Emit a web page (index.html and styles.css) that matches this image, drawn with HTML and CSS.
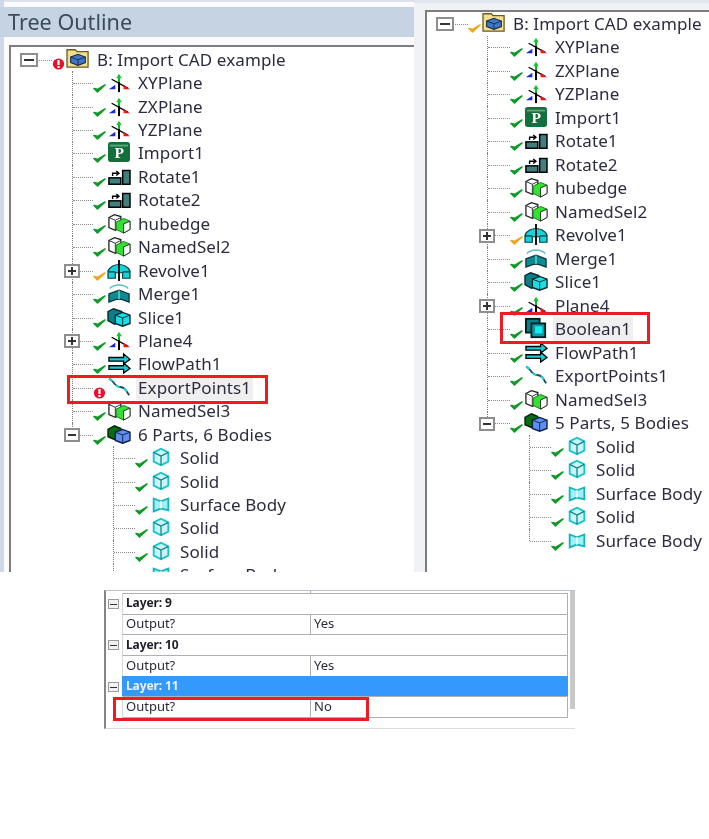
FILE: index.html
```html
<!DOCTYPE html>
<html lang="en">
<head>
<meta charset="utf-8">
<title>Tree Outline comparison</title>
<link rel="stylesheet" href="styles.css">
</head>
<body>
<svg class="defs" width="0" height="0" aria-hidden="true">
  <symbol id="i-ok" viewBox="0 0 13 12"><path d="M1 6.5 4.5 10 12 3 4.6 7.4Z" fill="#109a28" stroke="#109a28" stroke-width="1.6" stroke-linejoin="round"/></symbol>
  <symbol id="i-warn" viewBox="0 0 13 12"><path d="M1 6.5 4.5 10 12 3 4.6 7.4Z" fill="#eaa91f" stroke="#eaa91f" stroke-width="1.6" stroke-linejoin="round"/></symbol>
  <symbol id="i-err" viewBox="0 0 13 12"><circle cx="6.5" cy="6" r="5.6" fill="#e5122a"/><rect x="5.4" y="2" width="2.2" height="5" fill="#fff"/><rect x="5.4" y="8" width="2.2" height="2" fill="#fff"/></symbol>
  <symbol id="i-folder" viewBox="0 0 26 24"><path d="M1 3h9l2 2h12v17H1Z" fill="#f3df8f" stroke="#6d5a20" stroke-width="1.4"/><path d="M5 11l8-3 8 3v6l-8 3-8-3Z" fill="#3f78c8" stroke="#1b2c48" stroke-width="1.2"/><path d="M5 11l8 3 8-3M13 14v6" fill="none" stroke="#1b2c48"/></symbol>
  <symbol id="i-plane" viewBox="0 0 26 24"><path d="M13 8v15" stroke="#000" stroke-width="2.2"/><path d="M5 9 23 19" stroke="#000" stroke-width="1.5"/><path d="M13 3l-3 5h6Z" fill="#12c22c"/><path d="M13 6v6" stroke="#12c22c" stroke-width="2"/><path d="M2 20l7-5v5Z" fill="#1c24e8"/><path d="M18 15l7 5h-7Z" fill="#e51616"/></symbol>
  <symbol id="i-rotate" viewBox="0 0 26 24"><rect x="2" y="14" width="13" height="7" fill="#3f7f7e" stroke="#000" stroke-width="1.6"/><rect x="17" y="6" width="8" height="15" fill="#3f7f7e" stroke="#000" stroke-width="1.6"/><path d="M6 12V9h6M10 6.5 13 9l-3 2.5" fill="none" stroke="#000" stroke-width="1.5"/></symbol>
  <symbol id="i-named" viewBox="0 0 26 24"><path d="M2 6 8 3l7 2v12l-6 3-7-3Z" fill="#fff" stroke="#222" stroke-width="1.4"/><path d="M2 6l7 3 6-3M9 9v11" fill="none" stroke="#222"/><path d="M10 11l8-4 7 3v9l-7 4-8-4Z" fill="#2fe32f" stroke="#1c6e1c"/><path d="M18 13v10l7-4V10Z" fill="#fff" stroke="#222"/></symbol>
  <symbol id="i-revolve" viewBox="0 0 26 24"><path d="M1 21v-8C3 8 9 6 13 6s10 2 12 7v8h-8v-6H9v6Z" fill="#17d4dc" stroke="#0a3b42" stroke-width="1.3"/><path d="M1 14h8M17 14h8" stroke="#0a3b42" stroke-width="1.2"/><path d="M13 1v23" stroke="#000" stroke-width="2"/></symbol>
  <symbol id="i-merge" viewBox="0 0 26 24"><path d="M3 7C8 2 18 2 23 7" fill="none" stroke="#5dbcc0" stroke-width="1.5"/><path d="M2 13 13 9l11 4v9l-8-3h-6l-8 3Z" fill="#0e8b92" stroke="#06353a" stroke-width="1.4"/><path d="M13 9v10" stroke="#9fe" stroke-width="1"/></symbol>
  <symbol id="i-slice" viewBox="0 0 26 24"><path d="M1 6 7 3l9 3v11l-8 3-7-4Z" fill="#0b7f87" stroke="#03272b" stroke-width="1.5"/><path d="M9 10l8-3 8 3v9l-8 3-8-3Z" fill="#16dfe8" stroke="#03272b" stroke-width="1.5"/><path d="M9 10l8 3 8-3M17 13v9" fill="none" stroke="#03272b"/></symbol>
  <symbol id="i-flow" viewBox="0 0 26 24"><path d="M2 6h16V2l7 6-7 5v-3H2Z" fill="#19cdd6" stroke="#000" stroke-width="1.4"/><path d="M2 15h16v-3l7 6-7 5v-4H2Z" fill="#19cdd6" stroke="#000" stroke-width="1.4"/></symbol>
  <symbol id="i-export" viewBox="0 0 26 24"><path d="M2 3c5 1 6 9 12 9 5 0 7 4 10 9" fill="none" stroke="#1d4a50" stroke-width="2"/><path d="M2 3c5 1 6 9 12 9 5 0 7 4 10 9" fill="none" stroke="#19d3dc" stroke-width="2" stroke-dasharray="5 5"/></symbol>
  <symbol id="i-parts" viewBox="0 0 26 24"><path d="M1 7 8 3l7 3v9l-7 3-7-3Z" fill="#0a6c12" stroke="#02230a" stroke-width="1.5"/><path d="M9 10l8-3 8 3v9l-8 3-8-3Z" fill="#5c8ff0" stroke="#101f48" stroke-width="1.5"/><path d="M9 10l8 3 8-3M17 13v9" fill="none" stroke="#101f48"/></symbol>
  <symbol id="i-solid" viewBox="0 0 26 24"><path d="M5 7l8-4 8 4v10l-8 4-8-4Z" fill="#c7f5f8" stroke="#17c3cd" stroke-width="2"/><path d="M5 7l8 4 8-4M13 11v10" fill="none" stroke="#15808a" stroke-width="1.4"/></symbol>
  <symbol id="i-surface" viewBox="0 0 26 24"><path d="M5 6l8 3 8-3v13l-8-2-8 3Z" fill="#9ef0f4" stroke="#17b3bd" stroke-width="2"/><path d="M13 9v8" stroke="#e8ffff" stroke-width="2"/></symbol>
  <symbol id="i-boolean" viewBox="0 0 26 24"><rect x="2" y="2" width="15" height="15" fill="#0b7f87" stroke="#021e22" stroke-width="2"/><rect x="8" y="7" width="15" height="15" fill="#0e9aa2" stroke="#021e22" stroke-width="2"/><rect x="12" y="10" width="8" height="8" fill="#16e9f0"/></symbol>
</svg>

<div class="collage">
  <section class="panel panel-left">
    <h1 class="panel-title">Tree Outline</h1>
    <div class="tree-frame tree-frame-left">
      <div class="tree">
        <div class="row root"><span class="slot slot-bare"><span class="exp exp-root exp-minus"></span></span><svg class="status"><use href="#i-err"/></svg><svg class="ico"><use href="#i-folder"/></svg><span class="label">B: Import CAD example</span></div>
        <div class="branch level1">
          <div class="row"><span class="slot"></span><svg class="status"><use href="#i-ok"/></svg><svg class="ico"><use href="#i-plane"/></svg><span class="label">XYPlane</span></div>
          <div class="row"><span class="slot"></span><svg class="status"><use href="#i-ok"/></svg><svg class="ico"><use href="#i-plane"/></svg><span class="label">ZXPlane</span></div>
          <div class="row"><span class="slot"></span><svg class="status"><use href="#i-ok"/></svg><svg class="ico"><use href="#i-plane"/></svg><span class="label">YZPlane</span></div>
          <div class="row"><span class="slot"></span><svg class="status"><use href="#i-ok"/></svg><svg class="ico" viewBox="0 0 26 24"><rect x="1" y="1" width="24" height="22" rx="3" fill="#136f3c"/><rect x="3" y="4" width="20" height="2" fill="#5fa77f"/><text x="8" y="18" class="svg-p">P</text></svg><span class="label">Import1</span></div>
          <div class="row"><span class="slot"></span><svg class="status"><use href="#i-ok"/></svg><svg class="ico"><use href="#i-rotate"/></svg><span class="label">Rotate1</span></div>
          <div class="row"><span class="slot"></span><svg class="status"><use href="#i-ok"/></svg><svg class="ico"><use href="#i-rotate"/></svg><span class="label">Rotate2</span></div>
          <div class="row"><span class="slot"></span><svg class="status"><use href="#i-ok"/></svg><svg class="ico"><use href="#i-named"/></svg><span class="label">hubedge</span></div>
          <div class="row"><span class="slot"></span><svg class="status"><use href="#i-ok"/></svg><svg class="ico"><use href="#i-named"/></svg><span class="label">NamedSel2</span></div>
          <div class="row"><span class="slot"><span class="exp exp-plus"></span></span><svg class="status"><use href="#i-warn"/></svg><svg class="ico"><use href="#i-revolve"/></svg><span class="label">Revolve1</span></div>
          <div class="row"><span class="slot"></span><svg class="status"><use href="#i-ok"/></svg><svg class="ico"><use href="#i-merge"/></svg><span class="label">Merge1</span></div>
          <div class="row"><span class="slot"></span><svg class="status"><use href="#i-ok"/></svg><svg class="ico"><use href="#i-slice"/></svg><span class="label">Slice1</span></div>
          <div class="row"><span class="slot"><span class="exp exp-plus"></span></span><svg class="status"><use href="#i-ok"/></svg><svg class="ico"><use href="#i-plane"/></svg><span class="label">Plane4</span></div>
          <div class="row"><span class="slot"></span><svg class="status"><use href="#i-ok"/></svg><svg class="ico"><use href="#i-flow"/></svg><span class="label">FlowPath1</span></div>
          <div class="row"><span class="slot"></span><svg class="status"><use href="#i-err"/></svg><svg class="ico"><use href="#i-export"/></svg><span class="label label-hover">ExportPoints1</span></div>
          <div class="row"><span class="slot"></span><svg class="status"><use href="#i-ok"/></svg><svg class="ico"><use href="#i-named"/></svg><span class="label">NamedSel3</span></div>
          <div class="row last"><span class="slot"><span class="exp exp-minus"></span></span><svg class="status"><use href="#i-ok"/></svg><svg class="ico"><use href="#i-parts"/></svg><span class="label">6 Parts, 6 Bodies</span></div>
          <div class="branch level2">
            <div class="row"><span class="slot"></span><svg class="status"><use href="#i-ok"/></svg><svg class="ico"><use href="#i-solid"/></svg><span class="label">Solid</span></div>
            <div class="row"><span class="slot"></span><svg class="status"><use href="#i-ok"/></svg><svg class="ico"><use href="#i-solid"/></svg><span class="label">Solid</span></div>
            <div class="row"><span class="slot"></span><svg class="status"><use href="#i-ok"/></svg><svg class="ico"><use href="#i-surface"/></svg><span class="label">Surface Body</span></div>
            <div class="row"><span class="slot"></span><svg class="status"><use href="#i-ok"/></svg><svg class="ico"><use href="#i-solid"/></svg><span class="label">Solid</span></div>
            <div class="row"><span class="slot"></span><svg class="status"><use href="#i-ok"/></svg><svg class="ico"><use href="#i-solid"/></svg><span class="label">Solid</span></div>
            <div class="row"><span class="slot"></span><svg class="status"><use href="#i-ok"/></svg><svg class="ico"><use href="#i-surface"/></svg><span class="label">Surface Body</span></div>
          </div>
        </div>
      </div>
    </div>
    <div class="mark mark-export"></div>
  </section>

  <section class="panel panel-right">
    <div class="tree-frame tree-frame-right">
      <div class="tree">
        <div class="row root"><span class="slot slot-bare"><span class="exp exp-root exp-minus"></span></span><svg class="status"><use href="#i-warn"/></svg><svg class="ico"><use href="#i-folder"/></svg><span class="label">B: Import CAD example</span></div>
        <div class="branch level1">
          <div class="row"><span class="slot"></span><svg class="status"><use href="#i-ok"/></svg><svg class="ico"><use href="#i-plane"/></svg><span class="label">XYPlane</span></div>
          <div class="row"><span class="slot"></span><svg class="status"><use href="#i-ok"/></svg><svg class="ico"><use href="#i-plane"/></svg><span class="label">ZXPlane</span></div>
          <div class="row"><span class="slot"></span><svg class="status"><use href="#i-ok"/></svg><svg class="ico"><use href="#i-plane"/></svg><span class="label">YZPlane</span></div>
          <div class="row"><span class="slot"></span><svg class="status"><use href="#i-ok"/></svg><svg class="ico" viewBox="0 0 26 24"><rect x="1" y="1" width="24" height="22" rx="3" fill="#136f3c"/><rect x="3" y="4" width="20" height="2" fill="#5fa77f"/><text x="8" y="18" class="svg-p">P</text></svg><span class="label">Import1</span></div>
          <div class="row"><span class="slot"></span><svg class="status"><use href="#i-ok"/></svg><svg class="ico"><use href="#i-rotate"/></svg><span class="label">Rotate1</span></div>
          <div class="row"><span class="slot"></span><svg class="status"><use href="#i-ok"/></svg><svg class="ico"><use href="#i-rotate"/></svg><span class="label">Rotate2</span></div>
          <div class="row"><span class="slot"></span><svg class="status"><use href="#i-ok"/></svg><svg class="ico"><use href="#i-named"/></svg><span class="label">hubedge</span></div>
          <div class="row"><span class="slot"></span><svg class="status"><use href="#i-ok"/></svg><svg class="ico"><use href="#i-named"/></svg><span class="label">NamedSel2</span></div>
          <div class="row"><span class="slot"><span class="exp exp-plus"></span></span><svg class="status"><use href="#i-warn"/></svg><svg class="ico"><use href="#i-revolve"/></svg><span class="label">Revolve1</span></div>
          <div class="row"><span class="slot"></span><svg class="status"><use href="#i-ok"/></svg><svg class="ico"><use href="#i-merge"/></svg><span class="label">Merge1</span></div>
          <div class="row"><span class="slot"></span><svg class="status"><use href="#i-ok"/></svg><svg class="ico"><use href="#i-slice"/></svg><span class="label">Slice1</span></div>
          <div class="row"><span class="slot"><span class="exp exp-plus"></span></span><svg class="status"><use href="#i-ok"/></svg><svg class="ico"><use href="#i-plane"/></svg><span class="label">Plane4</span></div>
          <div class="row"><span class="slot"></span><svg class="status"><use href="#i-ok"/></svg><svg class="ico"><use href="#i-boolean"/></svg><span class="label label-hover">Boolean1</span></div>
          <div class="row"><span class="slot"></span><svg class="status"><use href="#i-ok"/></svg><svg class="ico"><use href="#i-flow"/></svg><span class="label">FlowPath1</span></div>
          <div class="row"><span class="slot"></span><svg class="status"><use href="#i-ok"/></svg><svg class="ico"><use href="#i-export"/></svg><span class="label">ExportPoints1</span></div>
          <div class="row"><span class="slot"></span><svg class="status"><use href="#i-ok"/></svg><svg class="ico"><use href="#i-named"/></svg><span class="label">NamedSel3</span></div>
          <div class="row last"><span class="slot"><span class="exp exp-minus"></span></span><svg class="status"><use href="#i-ok"/></svg><svg class="ico"><use href="#i-parts"/></svg><span class="label">5 Parts, 5 Bodies</span></div>
          <div class="branch level2">
            <div class="row"><span class="slot"></span><svg class="status"><use href="#i-ok"/></svg><svg class="ico"><use href="#i-solid"/></svg><span class="label">Solid</span></div>
            <div class="row"><span class="slot"></span><svg class="status"><use href="#i-ok"/></svg><svg class="ico"><use href="#i-solid"/></svg><span class="label">Solid</span></div>
            <div class="row"><span class="slot"></span><svg class="status"><use href="#i-ok"/></svg><svg class="ico"><use href="#i-surface"/></svg><span class="label">Surface Body</span></div>
            <div class="row"><span class="slot"></span><svg class="status"><use href="#i-ok"/></svg><svg class="ico"><use href="#i-solid"/></svg><span class="label">Solid</span></div>
            <div class="row last"><span class="slot"></span><svg class="status"><use href="#i-ok"/></svg><svg class="ico"><use href="#i-surface"/></svg><span class="label">Surface Body</span></div>
          </div>
        </div>
      </div>
    </div>
    <div class="mark mark-boolean"></div>
  </section>
</div>

<section class="grid-panel">
  <div class="grid-body">
    <div class="grid-stub"><span></span></div>
    <div class="group">
      <div class="group-head"><span class="exp exp-small exp-minus"></span><span class="head-cell">Layer: 9</span></div>
      <div class="group-row"><span class="cell-name">Output?</span><span class="cell-value">Yes</span></div>
    </div>
    <div class="group">
      <div class="group-head"><span class="exp exp-small exp-minus"></span><span class="head-cell">Layer: 10</span></div>
      <div class="group-row"><span class="cell-name">Output?</span><span class="cell-value">Yes</span></div>
    </div>
    <div class="group">
      <div class="group-head is-selected"><span class="exp exp-small exp-minus"></span><span class="head-cell">Layer: 11</span></div>
      <div class="group-row"><span class="cell-name">Output?</span><span class="cell-value">No</span></div>
    </div>
  </div>
  <div class="grid-scroll"><span class="grid-thumb"></span></div>
  <div class="mark mark-output"></div>
</section>
</body>
</html>
```

FILE: styles.css
```css
* { box-sizing: border-box; }
html, body { margin: 0; padding: 0; background: #fff; }
body { font-family: "Noto Sans", "Open Sans", "Liberation Sans", sans-serif; color: #2b2b3a; }
.defs { position: absolute; }
.svg-p { font-family: "Liberation Serif", serif; font-weight: 700; font-size: 17px; fill: #fff; }

.collage { display: flex; height: 572px; }

.panel { position: relative; height: 100%; }
.panel-left {
  width: 414px;
  display: flex;
  flex-direction: column;
  background: #fbfbfd;
  border-left: 4px solid #d0d9ea;
  padding-top: 7px;
  box-shadow: inset 0 2px 0 #dbe2ee;
}
.panel-title {
  margin: 0 0 8px -4px;
  height: 30px;
  padding-left: 8px;
  flex: none;
  background: #c5d3e3;
  color: #3b4b5c;
  font-size: 21.6px;
  font-weight: 400;
  line-height: 30px;
  filter: blur(.4px);
}
.tree-frame { background: #fff; overflow: hidden; }
.tree-frame-left {
  flex: 1;
  min-height: 0;
  margin-left: 5px;
  border-left: 2px solid #7d7d7d;
  border-top: 2px solid #7d7d7d;
  padding: 1px 0 0 18px;
}
.panel-right {
  flex: 1;
  background: #f1f2f5;
  padding: 10px 0 0 11px;
  box-shadow: inset 0 3px 0 #dfe6f0;
}
.tree-frame-right {
  height: 100%;
  border-left: 2px solid #7d7d7d;
  border-top: 2px solid #7d7d7d;
  padding: 0 0 0 18px;
}

.tree { filter: blur(.4px); font-size: 17px; letter-spacing: .1px; }
.row { position: relative; display: flex; align-items: center; height: 23.5px; white-space: nowrap; }
.tree-frame-left .row { height: 23.45px; }
.branch { position: relative; }
.level1 { margin-left: 43px; }
.tree-frame-right .level1 { margin-left: 42px; }
.level2 { margin-left: 41px; }
.tree-frame-right .level2 { margin-left: 42px; }

.slot { position: relative; flex: none; width: 21px; height: 100%; }
.root .slot { width: 23px; }
.tree-frame-right .level1 > .row .slot { width: 23px; }
.level2 > .row .slot { width: 22px; }
.slot::after {
  content: "";
  position: absolute;
  left: 1px;
  right: 0;
  top: 50%;
  border-top: 1px dotted #8c8c8c;
}
.branch > .row::before {
  content: "";
  position: absolute;
  left: 0;
  top: 0;
  bottom: 0;
  border-left: 1px dotted #7c7c7c;
}
.branch > .row.last::before { bottom: 50%; }

.status { flex: none; width: 13px; height: 12px; transform: translateY(5px); }
.ico { flex: none; width: 26px; height: 22px; margin-right: 6px; margin-top: -2px; }
.root .status { transform: translateY(4px); }
.root .ico { margin-top: -4px; }
.label { color: #2c2c40; padding: 0; line-height: 20px; }
.label-hover { background: #efefef; box-shadow: 0 0 0 2px #efefef; }

.exp {
  position: absolute;
  z-index: 1;
  width: 16px;
  height: 14px;
  background: #fff;
  border: 2px solid #8e8e8e;
}
.slot .exp { left: -8px; top: 5px; }
.exp-root { width: 18px; height: 14px; }
.slot .exp-root { left: -9px; top: 5px; }
.exp-minus::before, .exp-plus::before {
  content: "";
  position: absolute;
  left: 2px;
  right: 2px;
  top: 50%;
  height: 2px;
  margin-top: -1px;
  background: #333;
}
.exp-plus::after {
  content: "";
  position: absolute;
  top: 1px;
  bottom: 1px;
  left: 50%;
  width: 2px;
  margin-left: -1px;
  background: #333;
}

.mark { position: absolute; border: 3px solid #ed1c24; pointer-events: none; }
.mark-export { left: 63px; top: 375px; width: 201px; height: 29px; }
.mark-boolean { left: 86px; top: 312px; width: 150px; height: 32px; }
.mark-output { left: 7px; top: 106px; width: 256px; height: 24px; }

.grid-panel {
  position: relative;
  display: flex;
  width: 471px;
  height: 139px;
  margin: 18px 0 0 104px;
  border-left: 2px solid #858585;
  border-top: 1px solid #b6c2d4;
  border-bottom: 1px solid #dcdcdc;
}
.grid-body {
  width: 462px;
  flex: none;
  font-size: 13px;
  color: #2a2a38;
  filter: blur(.3px);
}
.grid-stub { height: 2px; padding-left: 16px; }
.grid-stub span { display: block; width: 189px; height: 100%; border-right: 1px solid #b0b0b0; }
.group-head, .group-row {
  position: relative;
  height: 20.67px;
  margin-left: 16px;
  display: flex;
  align-items: center;
  background: #fff;
  border-top: 1px solid #b0b0b0;
  border-left: 1px solid #d6d6d6;
  border-right: 1px solid #b0b0b0;
}
.group:last-child .group-row { height: 21.67px; border-bottom: 1px solid #b0b0b0; }
.head-cell { padding: 0 0 2px 3px; font-weight: 700; font-size: 12px; letter-spacing: -.1px; color: #1d1d28; }
.is-selected { background: #3399ff; border-color: #3399ff; }
.is-selected .head-cell { color: #e8f3ff; }
.cell-name { display: flex; align-items: center; width: 188px; padding: 0 0 2px 3px; height: 100%; border-right: 1px solid #b0b0b0; }
.cell-value { padding: 0 0 2px 3px; }
.exp-small { left: -15px; top: 5px; width: 11px; height: 10px; border: 1px solid #9a9a9a; background: #f2f2f2; }
.exp-small.exp-minus::before { left: 1px; right: 1px; height: 1px; margin-top: 0; background: #333; }
.grid-scroll { flex: 1; padding-left: 2px; background: #fff; }
.grid-thumb { display: block; width: 5px; height: 118px; background: #c8c8c8; }
```
